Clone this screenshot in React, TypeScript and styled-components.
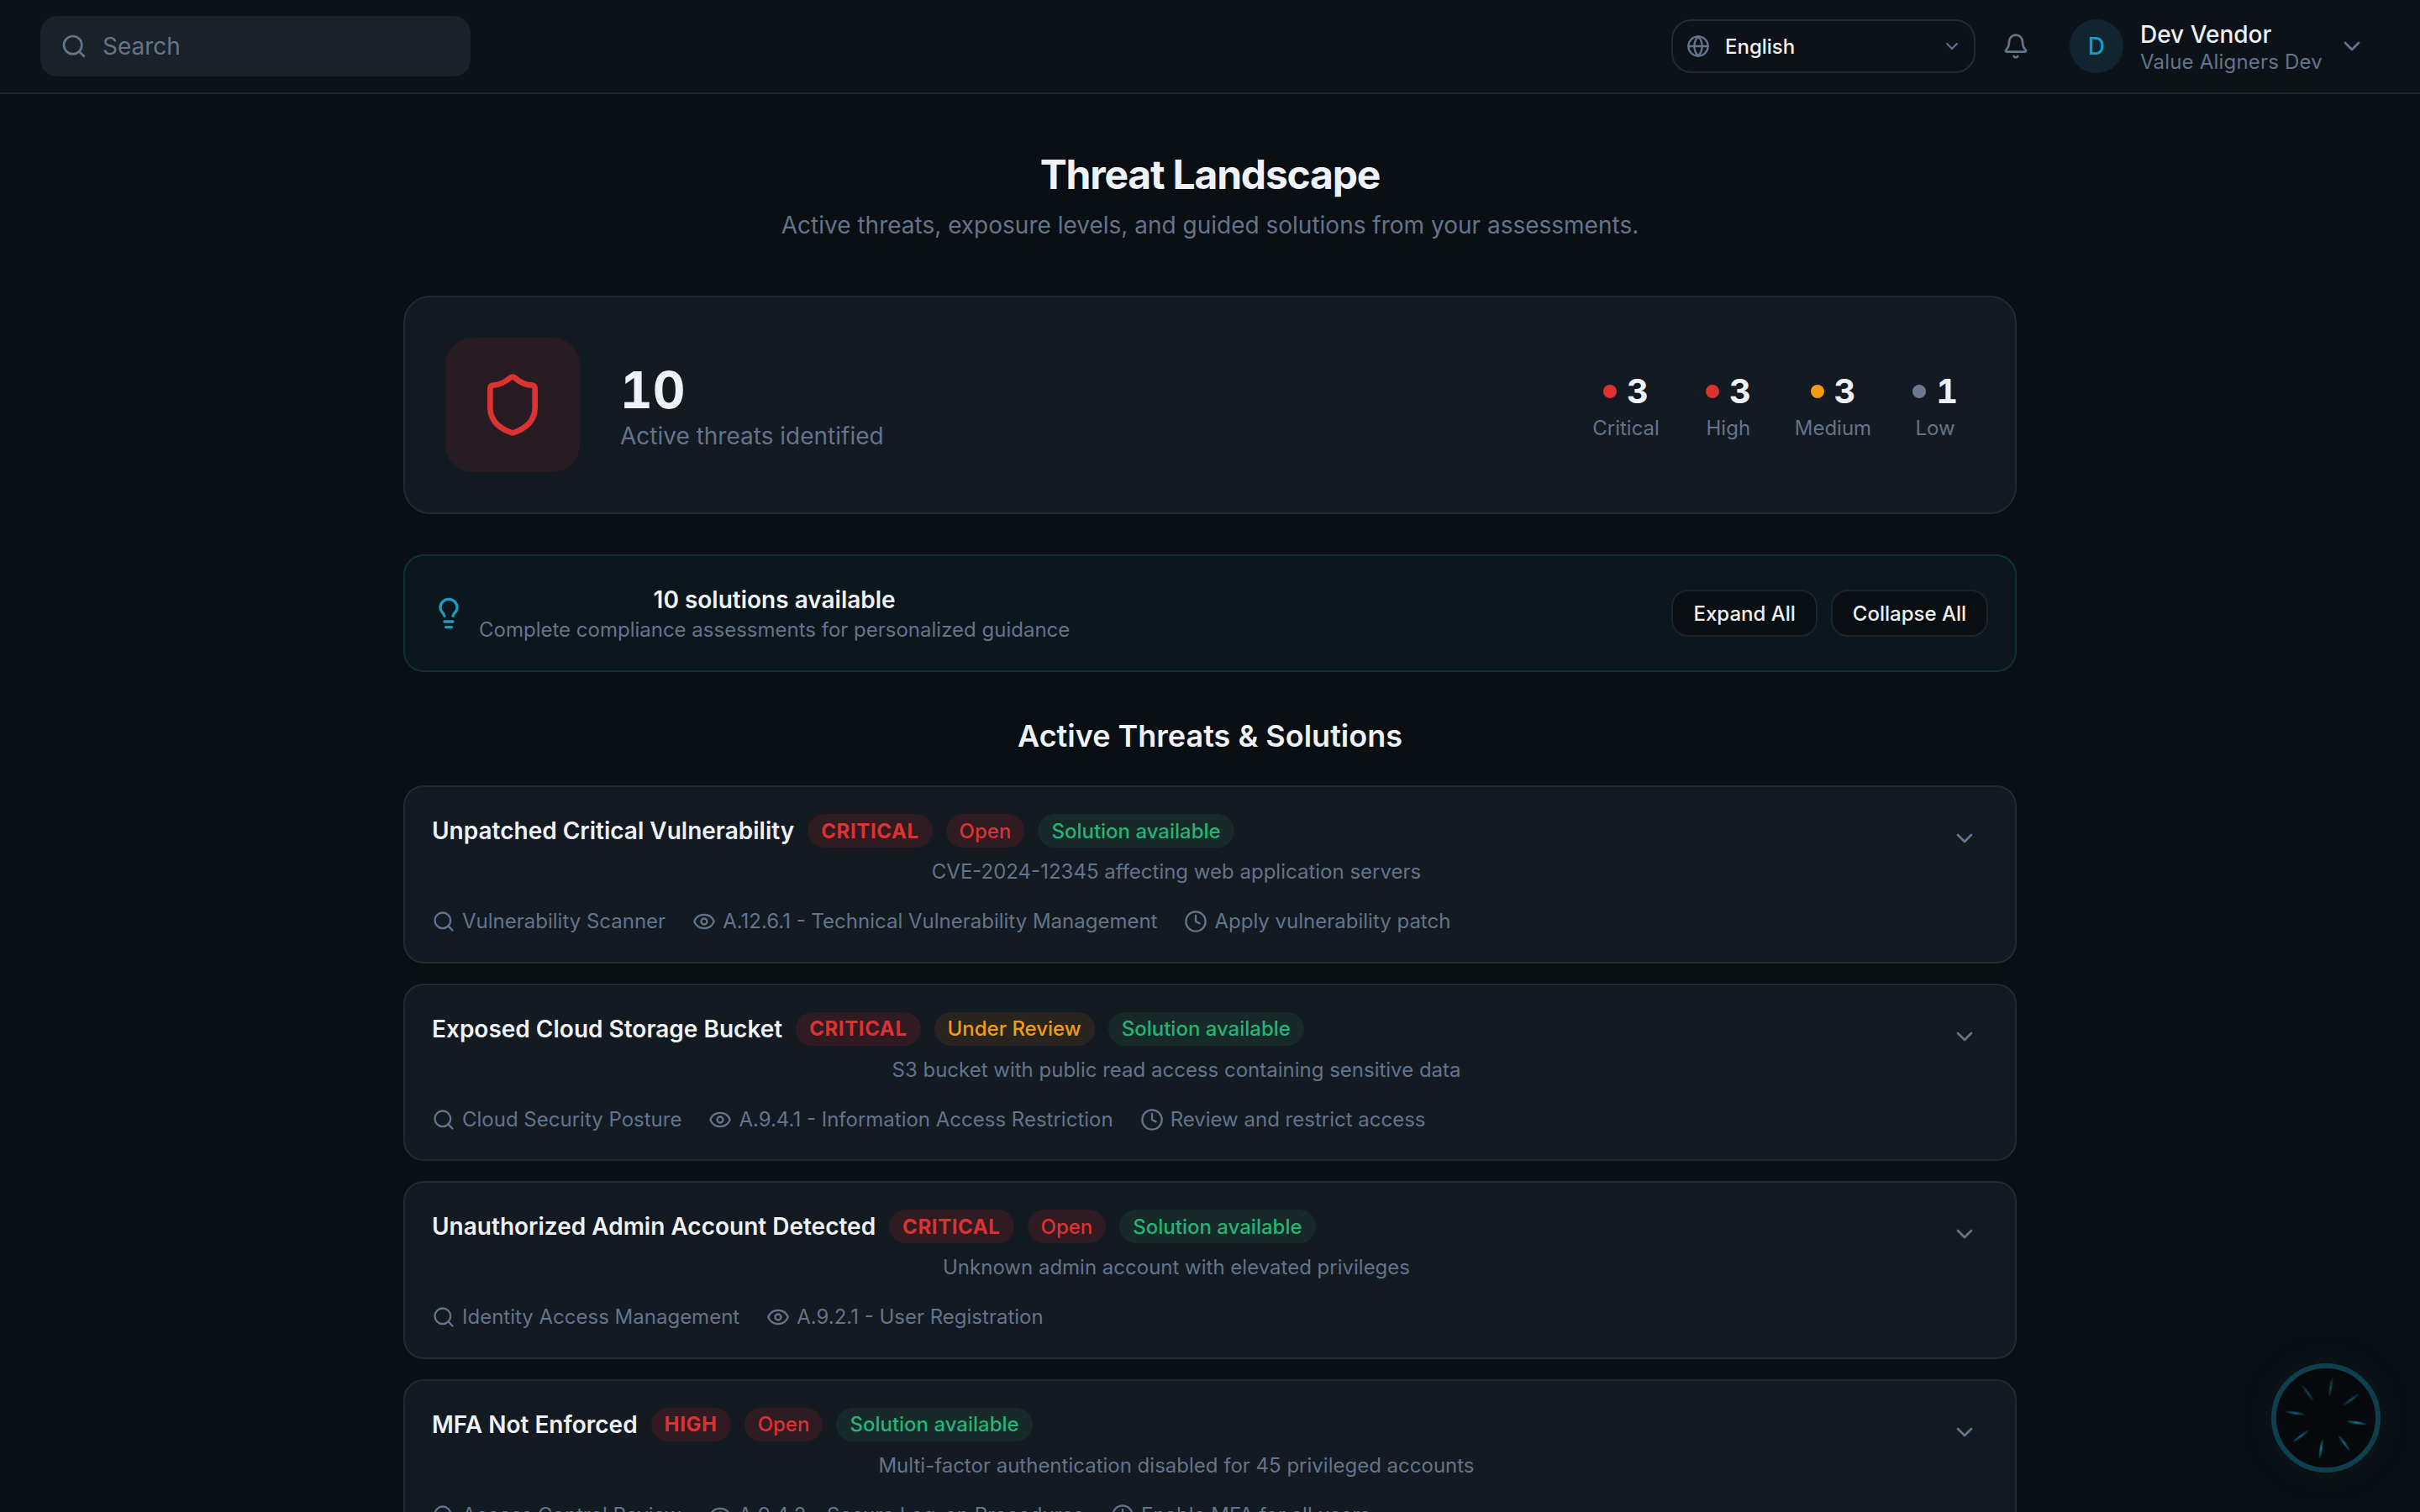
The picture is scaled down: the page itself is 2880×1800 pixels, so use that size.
import React from 'react';
import styled, { createGlobalStyle } from 'styled-components';
import { Bell, ChevronDown, Clock, Eye, Globe, Lightbulb, Search, Shield } from 'lucide-react';

const GlobalStyle = createGlobalStyle`
  html, body {
    margin: 0;
    height: 100%;
    overflow: hidden;
    background: #0a0f13;
  }
  body {
    font-family: Inter, "Liberation Sans", sans-serif;
    color: #eef1f5;
  }
  * { box-sizing: border-box; }
`;

const Page = styled.div`
  height: 1800px;
  overflow: hidden;
  background: #0a0f13;
`;

const TopBar = styled.header`
  height: 112px;
  padding: 0 48px;
  display: flex;
  align-items: center;
  justify-content: space-between;
  background: #0d1219;
  border-bottom: 2px solid #20262f;
`;

const SearchBox = styled.div`
  width: 512px;
  height: 72px;
  padding: 0 24px;
  display: flex;
  align-items: center;
  gap: 18px;
  background: #1a2129;
  border-radius: 20px;
  color: #64748b;
  font-size: 28px;
`;

const TopRight = styled.div`
  display: flex;
  align-items: center;
`;

const LangSelect = styled.div`
  width: 362px;
  height: 64px;
  padding: 0 14px 0 16px;
  display: flex;
  align-items: center;
  gap: 18px;
  border: 2px solid #252b35;
  border-radius: 24px;
  color: #64748b;
`;

const LangLabel = styled.span`
  flex: 1;
  font-size: 24px;
  font-weight: 500;
  color: #eef1f5;
`;

const BellWrap = styled.div`
  margin: 0 48px 0 32px;
  display: flex;
  color: #64748b;
`;

const Avatar = styled.div`
  width: 64px;
  height: 64px;
  border-radius: 50%;
  display: flex;
  align-items: center;
  justify-content: center;
  background: #10252f;
  color: #1a9cc0;
  font-size: 28px;
  font-weight: 500;
`;

const UserInfo = styled.div`
  margin: 0 19px 0 20px;
  padding-top: 4px;
  display: flex;
  flex-direction: column;
`;

const UserName = styled.span`
  font-size: 28px;
  line-height: 34px;
  font-weight: 500;
`;

const UserOrg = styled.span`
  font-size: 24px;
  line-height: 32px;
  letter-spacing: 0.2px;
  color: #64748b;
`;

const UserChevron = styled.div`
  margin-right: 17px;
  display: flex;
  color: #64748b;
`;

const Main = styled.main`
  width: 1920px;
  margin: 0 auto;
  padding-top: 66px;
`;

const Heading = styled.div`
  text-align: center;
  margin-bottom: 66px;
`;

const PageTitle = styled.h1`
  margin: 0;
  font-size: 48px;
  line-height: 60px;
  font-weight: 700;
  letter-spacing: -1.2px;
`;

const PageSubtitle = styled.p`
  margin: 12px 0 0;
  font-size: 28px;
  line-height: 36px;
  color: #64748b;
`;

const SummaryCard = styled.section`
  height: 260px;
  padding: 0 48px;
  display: flex;
  align-items: center;
  justify-content: space-between;
  background: #131a22;
  border: 2px solid #232a34;
  border-radius: 32px;
`;

const SummaryLeft = styled.div`
  display: flex;
  align-items: center;
  gap: 48px;
`;

const ShieldTile = styled.div`
  width: 160px;
  height: 160px;
  display: flex;
  align-items: center;
  justify-content: center;
  background: #271c22;
  border-radius: 32px;
  color: #dc3232;
`;

const TotalCount = styled.div`
  padding-top: 2px;
  font-size: 60px;
  line-height: 72px;
  font-weight: 700;
  font-variant-numeric: tabular-nums;
`;

const TotalLabel = styled.div`
  font-size: 28px;
  line-height: 38px;
  color: #64748b;
`;

const Stats = styled.div`
  display: flex;
  gap: 12px;
`;

const Stat = styled.div`
  padding: 4px 20px 0;
  display: flex;
  flex-direction: column;
  align-items: center;
  gap: 4px;

  &:first-child {
    margin-right: 3px;
  }

  &:last-child {
    margin-left: -3px;
  }
`;

const StatValue = styled.div`
  display: flex;
  align-items: center;
  gap: 12px;
  font-size: 40px;
  line-height: 48px;
  font-weight: 700;
  font-variant-numeric: tabular-nums;
`;

const Dot = styled.span<{ $color: string }>`
  width: 16px;
  height: 16px;
  border-radius: 50%;
  background: ${p => p.$color};
`;

const StatLabel = styled.div`
  font-size: 24px;
  line-height: 32px;
  color: #64748b;
`;

const SolutionsBanner = styled.section`
  height: 140px;
  margin-top: 48px;
  padding: 0 32px;
  display: flex;
  align-items: center;
  gap: 16px;
  background: #0c171d;
  border: 2px solid #12303a;
  border-radius: 24px;
  color: #1a9cc0;
`;

const BannerText = styled.div`
  flex: 1;
  padding-top: 2px;
  display: flex;
  flex-direction: column;
  align-items: flex-start;
`;

const BannerInner = styled.div`
  text-align: center;
`;

const BannerTitle = styled.div`
  font-size: 28px;
  line-height: 38px;
  font-weight: 600;
  color: #eef1f5;
`;

const BannerSub = styled.div`
  font-size: 24px;
  line-height: 34px;
  color: #64748b;
`;

const BannerActions = styled.div`
  display: flex;
  gap: 16px;
`;

const GhostButton = styled.button`
  height: 56px;
  padding: 0 24px;
  background: #0a0f13;
  border: 2px solid #1c232c;
  border-radius: 20px;
  color: #eef1f5;
  font-family: inherit;
  font-size: 24px;
  font-weight: 500;
`;

const SectionTitle = styled.h2`
  margin: 54px 0 37px;
  text-align: center;
  font-size: 36px;
  line-height: 44px;
  font-weight: 600;
`;

const ThreatList = styled.div`
  display: flex;
  flex-direction: column;
  gap: 24px;
`;

const ThreatCard = styled.article`
  height: 211.5px;
  flex-shrink: 0;
  padding: 32px 32px 0;
  display: flex;
  gap: 24px;
  background: #131a22;
  border: 2px solid #232a34;
  border-radius: 24px;
`;

const ThreatBody = styled.div`
  flex: 1;
  min-width: 0;
`;

const TitleRow = styled.div`
  display: flex;
  align-items: center;
  gap: 16px;
`;

const ThreatTitle = styled.h3`
  margin: 0;
  font-size: 28px;
  line-height: 40px;
  font-weight: 600;
`;

const tones = {
  red: { fg: '#dc3232', bg: '#2f1b21' },
  amber: { fg: '#f39c12', bg: '#2a2420' },
  green: { fg: '#24b574', bg: '#172a29' },
};

const Badge = styled.span<{ $tone: keyof typeof tones; $strong?: boolean }>`
  height: 40px;
  padding: 0 16px;
  display: flex;
  align-items: center;
  border-radius: 20px;
  font-size: 24px;
  font-weight: ${p => (p.$strong ? 700 : 500)};
  letter-spacing: ${p => (p.$strong ? '0.6px' : 'normal')};
  color: ${p => tones[p.$tone].fg};
  background: ${p => tones[p.$tone].bg};
`;

const ThreatDesc = styled.p`
  margin: 12px 0 0;
  text-align: center;
  font-size: 24px;
  line-height: 34px;
  color: #64748b;
`;

const MetaRow = styled.div`
  margin-top: 26px;
  display: flex;
  gap: 32px;
`;

const MetaItem = styled.span`
  display: flex;
  align-items: center;
  gap: 8px;
  font-size: 24px;
  line-height: 32px;
  color: #64748b;
`;

const ExpandToggle = styled.div`
  width: 56px;
  padding-top: 13px;
  display: flex;
  justify-content: center;
  color: #64748b;
`;

const AssistantButton = styled.div`
  position: fixed;
  right: 47px;
  bottom: 47px;
  width: 130px;
  height: 130px;
  display: flex;
  align-items: center;
  justify-content: center;
  background: #07090c;
  border: 6px solid #0f3f4d;
  border-radius: 50%;
  box-shadow: 0 0 40px rgba(16, 90, 110, 0.12);
`;

const threats = [
  {
    title: 'Unpatched Critical Vulnerability',
    severity: 'CRITICAL',
    status: 'Open',
    desc: 'CVE-2024-12345 affecting web application servers',
    source: 'Vulnerability Scanner',
    control: 'A.12.6.1 - Technical Vulnerability Management',
    action: 'Apply vulnerability patch',
  },
  {
    title: 'Exposed Cloud Storage Bucket',
    severity: 'CRITICAL',
    status: 'Under Review',
    desc: 'S3 bucket with public read access containing sensitive data',
    source: 'Cloud Security Posture',
    control: 'A.9.4.1 - Information Access Restriction',
    action: 'Review and restrict access',
  },
  {
    title: 'Unauthorized Admin Account Detected',
    severity: 'CRITICAL',
    status: 'Open',
    desc: 'Unknown admin account with elevated privileges',
    source: 'Identity Access Management',
    control: 'A.9.2.1 - User Registration',
  },
  {
    title: 'MFA Not Enforced',
    severity: 'HIGH',
    status: 'Open',
    desc: 'Multi-factor authentication disabled for 45 privileged accounts',
    source: 'Access Control Review',
    control: 'A.9.4.2 - Secure Log-on Procedures',
    action: 'Enable MFA for all users',
  },
];

const stats = [
  { label: 'Critical', value: 3, color: '#dc3232' },
  { label: 'High', value: 3, color: '#dc3232' },
  { label: 'Medium', value: 3, color: '#f39c12' },
  { label: 'Low', value: 1, color: '#6b7a90' },
];

// blades sit a bit off the axes, the lower ones catch more of the glow
const blades = [
  { angle: 9, opacity: 0.55 },
  { angle: 54, opacity: 0.6 },
  { angle: 99, opacity: 0.95 },
  { angle: 144, opacity: 0.8 },
  { angle: 189, opacity: 0.95 },
  { angle: 234, opacity: 0.75 },
  { angle: 279, opacity: 0.75 },
  { angle: 324, opacity: 0.5 },
];

const SpinnerMark = () => (
  <svg width="118" height="118" viewBox="-59 -59 118 118">
    <defs>
      <radialGradient id="bladeGlow" r="0.5">
        <stop offset="0%" stopColor="#169cbd" />
        <stop offset="35%" stopColor="#0e5b70" />
        <stop offset="100%" stopColor="#0a2a35" />
      </radialGradient>
    </defs>
    {blades.map(b => (
      <ellipse
        key={b.angle}
        cx="0"
        cy="-37"
        rx="2"
        ry="11.5"
        fill="url(#bladeGlow)"
        opacity={b.opacity}
        transform={`rotate(${b.angle})`}
      />
    ))}
  </svg>
);

export default function App() {
  return (
    <Page>
      <GlobalStyle />
      <TopBar>
        <SearchBox>
          <Search size={32} />
          Search
        </SearchBox>
        <TopRight>
          <LangSelect>
            <Globe size={28} />
            <LangLabel>English</LangLabel>
            <ChevronDown size={24} />
          </LangSelect>
          <BellWrap>
            <Bell size={32} />
          </BellWrap>
          <Avatar>D</Avatar>
          <UserInfo>
            <UserName>Dev Vendor</UserName>
            <UserOrg>Value Aligners Dev</UserOrg>
          </UserInfo>
          <UserChevron>
            <ChevronDown size={32} />
          </UserChevron>
        </TopRight>
      </TopBar>
      <Main>
        <Heading>
          <PageTitle>Threat Landscape</PageTitle>
          <PageSubtitle>Active threats, exposure levels, and guided solutions from your assessments.</PageSubtitle>
        </Heading>
        <SummaryCard>
          <SummaryLeft>
            <ShieldTile>
              <Shield size={80} strokeWidth={2} />
            </ShieldTile>
            <div>
              <TotalCount>10</TotalCount>
              <TotalLabel>Active threats identified</TotalLabel>
            </div>
          </SummaryLeft>
          <Stats>
            {stats.map(s => (
              <Stat key={s.label}>
                <StatValue>
                  <Dot $color={s.color} />
                  {s.value}
                </StatValue>
                <StatLabel>{s.label}</StatLabel>
              </Stat>
            ))}
          </Stats>
        </SummaryCard>
        <SolutionsBanner>
          <Lightbulb size={40} />
          <BannerText>
            <BannerInner>
              <BannerTitle>10 solutions available</BannerTitle>
              <BannerSub>Complete compliance assessments for personalized guidance</BannerSub>
            </BannerInner>
          </BannerText>
          <BannerActions>
            <GhostButton>Expand All</GhostButton>
            <GhostButton>Collapse All</GhostButton>
          </BannerActions>
        </SolutionsBanner>
        <SectionTitle>Active Threats &amp; Solutions</SectionTitle>
        <ThreatList>
          {threats.map(t => (
            <ThreatCard key={t.title}>
              <ThreatBody>
                <TitleRow>
                  <ThreatTitle>{t.title}</ThreatTitle>
                  <Badge $tone="red" $strong>{t.severity}</Badge>
                  <Badge $tone={t.status === 'Open' ? 'red' : 'amber'}>{t.status}</Badge>
                  <Badge $tone="green">Solution available</Badge>
                </TitleRow>
                <ThreatDesc>{t.desc}</ThreatDesc>
                <MetaRow>
                  <MetaItem><Search size={28} />{t.source}</MetaItem>
                  <MetaItem><Eye size={28} />{t.control}</MetaItem>
                  {t.action && <MetaItem><Clock size={28} />{t.action}</MetaItem>}
                </MetaRow>
              </ThreatBody>
              <ExpandToggle>
                <ChevronDown size={32} />
              </ExpandToggle>
            </ThreatCard>
          ))}
        </ThreatList>
      </Main>
      <AssistantButton>
        <SpinnerMark />
      </AssistantButton>
    </Page>
  );
}
